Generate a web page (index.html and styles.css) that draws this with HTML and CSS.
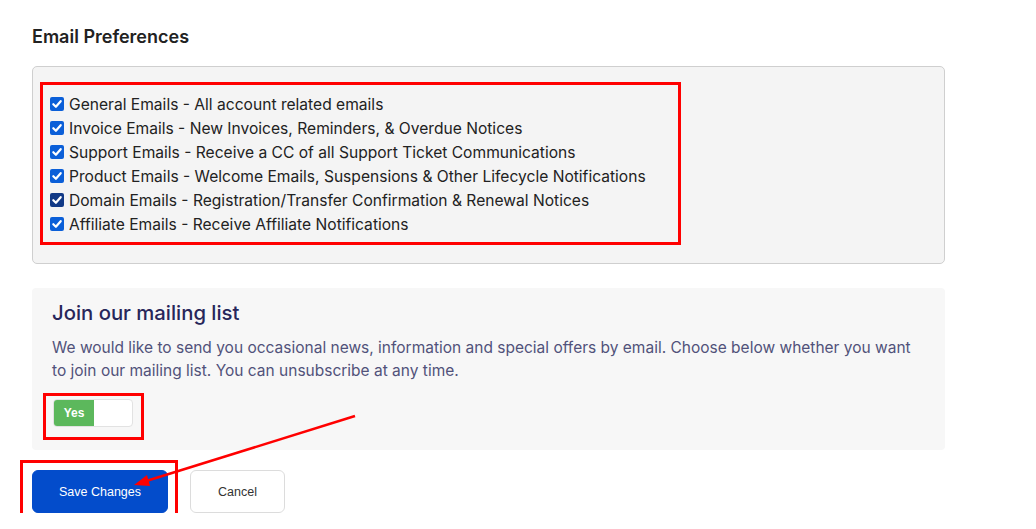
FILE: index.html
```html
<!DOCTYPE html>
<html>
<head>
<meta charset="utf-8">
<link rel="stylesheet" href="styles.css">
</head>
<body>
<div class="page">
  <h3 class="title">Email Preferences</h3>
  <div class="prefs">
    <label class="row"><span class="cb"><svg viewBox="0 0 14 14"><path d="M3.3 7.2 L5.9 9.8 L10.7 4.2" /></svg></span>General Emails - All account related emails</label>
    <label class="row"><span class="cb"><svg viewBox="0 0 14 14"><path d="M3.3 7.2 L5.9 9.8 L10.7 4.2" /></svg></span>Invoice Emails - New Invoices, Reminders, &amp; Overdue Notices</label>
    <label class="row"><span class="cb"><svg viewBox="0 0 14 14"><path d="M3.3 7.2 L5.9 9.8 L10.7 4.2" /></svg></span>Support Emails - Receive a CC of all Support Ticket Communications</label>
    <label class="row"><span class="cb"><svg viewBox="0 0 14 14"><path d="M3.3 7.2 L5.9 9.8 L10.7 4.2" /></svg></span>Product Emails - Welcome Emails, Suspensions &amp; Other Lifecycle Notifications</label>
    <label class="row"><span class="cb dark"><svg viewBox="0 0 14 14"><path d="M3.3 7.2 L5.9 9.8 L10.7 4.2" /></svg></span>Domain Emails - Registration/Transfer Confirmation &amp; Renewal Notices</label>
    <label class="row"><span class="cb"><svg viewBox="0 0 14 14"><path d="M3.3 7.2 L5.9 9.8 L10.7 4.2" /></svg></span>Affiliate Emails - Receive Affiliate Notifications</label>
    <div class="mark mark-prefs"></div>
  </div>
  <div class="mailing">
    <h4 class="m-title">Join our mailing list</h4>
    <p class="m-text">We would like to send you occasional news, information and special offers by email. Choose below whether you want to join our mailing list. You can unsubscribe at any time.</p>
    <div class="toggle"><span class="on">Yes</span><span class="off"></span></div>
    <div class="mark mark-toggle"></div>
  </div>
  <div class="actions">
    <button class="btn primary">Save Changes</button>
    <button class="btn default">Cancel</button>
    <div class="mark mark-save"></div>
  </div>
  <svg class="arrow" width="1036" height="529" viewBox="0 0 1036 529">
    <line x1="355" y1="416" x2="143" y2="482" stroke="#f00" stroke-width="2.5"/>
    <polygon points="134,485 147,475 150,486" fill="#f00"/>
  </svg>
</div>
</body>
</html>
```

FILE: styles.css
```css
html, body {
  margin: 0;
  padding: 0;
  background: #fff;
}
body {
  font-family: "Inter", "Noto Sans", sans-serif;
  color: #222;
}
.page {
  position: relative;
  width: 913px;
  padding: 26px 0 0 32px;
}
.title {
  margin: 0;
  font-size: 18px;
  font-weight: 600;
  line-height: 22px;
  color: #222;
}
.prefs {
  position: relative;
  margin-top: 18px;
  height: 198px;
  box-sizing: border-box;
  padding: 25px 0 0 17px;
  background: #f4f4f4;
  border: 1px solid #cfcfcf;
  border-radius: 5px;
}
.row {
  display: flex;
  align-items: center;
  height: 24px;
  font-size: 15.6px;
  color: #222;
  white-space: nowrap;
}
.cb {
  width: 14px;
  height: 14px;
  border-radius: 2px;
  background: #0b5fd8;
  margin-right: 5px;
  display: inline-flex;
}
.cb.dark { background: #123a86; }
.cb svg { width: 14px; height: 14px; }
.cb path { fill: none; stroke: #fff; stroke-width: 2.2; stroke-linecap: round; stroke-linejoin: round; }
.mark {
  position: absolute;
  border: 3px solid #f00;
  box-sizing: border-box;
  pointer-events: none;
}
.mark-prefs { left: 7px; top: 15px; width: 641px; height: 163px; }
.mailing {
  position: relative;
  margin-top: 24px;
  height: 162px;
  box-sizing: border-box;
  padding: 12px 20px 0 20px;
  background: #f7f7f7;
  border-radius: 4px;
}
.m-title {
  margin: 0;
  font-size: 20.3px;
  font-weight: 500;
  line-height: 26px;
  color: #27265a;
}
.m-text {
  margin: 10px 0 0;
  font-size: 15.5px;
  line-height: 23px;
  color: #51527a;
}
.toggle {
  margin-top: 17px;
  margin-left: 1px;
  display: flex;
  width: 80px;
  height: 28px;
  box-sizing: border-box;
  border: 1px solid #e2e2e2;
  border-radius: 4px;
  background: #fff;
  overflow: hidden;
}
.toggle .on {
  width: 40px;
  background: #5cb85c;
  color: #fff;
  font-family: "Liberation Sans", Arial, sans-serif;
  font-size: 12px;
  font-weight: 700;
  display: flex;
  align-items: center;
  justify-content: center;
}
.mark-toggle { left: 11px; top: 105px; width: 101px; height: 47px; }
.actions {
  position: relative;
  margin-top: 20px;
  display: flex;
  gap: 22px;
}
.btn {
  height: 43px;
  border-radius: 6px;
  font-family: "Liberation Sans", Arial, sans-serif;
  font-size: 12.5px;
  cursor: pointer;
}
.btn.primary {
  width: 136px;
  background: #034ccb;
  border: 1px solid #034ccb;
  color: #fff;
}
.btn.default {
  width: 95px;
  background: #fff;
  border: 1px solid #dcdcdc;
  color: #333;
}
.mark-save { left: -12px; top: -10px; width: 158px; height: 62px; }
.arrow {
  position: absolute;
  left: 0;
  top: 0;
  pointer-events: none;
}
```
